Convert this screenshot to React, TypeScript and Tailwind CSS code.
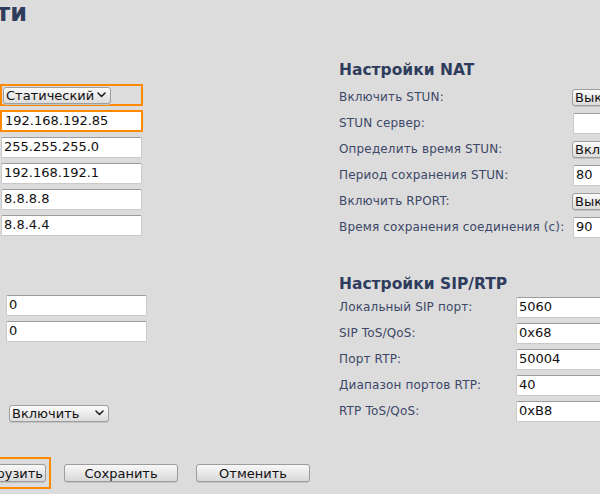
import React from 'react'

const font = { fontFamily: '"DejaVu Sans", "Noto Sans", sans-serif' }

function Chevron() {
  return (
    <svg width="9" height="6" viewBox="0 0 9 6" className="shrink-0">
      <polyline points="1,1 4.5,4.5 8,1" fill="none" stroke="#222" strokeWidth="1.6" strokeLinecap="round" strokeLinejoin="round" />
    </svg>
  )
}

function Select({ value, className = '' }: { value: string; className?: string }) {
  return (
    <div
      className={`flex h-[17px] items-center justify-between rounded-[3px] border border-[#9e9e9e] bg-gradient-to-b from-[#fbfbfb] to-[#dcdcdc] pl-[2px] pr-[4px] text-[13px] leading-none text-[#111] shadow-[0_1px_0_#c4c4c4] ${className}`}
    >
      <span className="whitespace-nowrap">{value}</span>
      <Chevron />
    </div>
  )
}

function Field({ value, className = '', highlight = false }: { value: string; className?: string; highlight?: boolean }) {
  if (highlight) {
    return (
      <div className={`flex h-[22px] items-center border-2 border-[#ff8a00] bg-white pl-[3px] text-[13px] text-[#111] ${className}`}>
        {value}
      </div>
    )
  }
  return (
    <div
      className={`flex h-[21px] items-center rounded-[2px] border border-[#c9c9c9] border-t-[#9c9c9c] bg-white pl-[2px] text-[13px] text-[#111] ${className}`}
    >
      {value}
    </div>
  )
}

function Button({ label, className = 'w-[114px]' }: { label: string; className?: string }) {
  return (
    <div
      className={`flex h-[18px] shrink-0 items-center justify-center whitespace-nowrap rounded-[3px] border border-[#9c9c9c] bg-gradient-to-b from-[#f8f8f8] to-[#d8d8d8] text-[13px] leading-none text-[#111] shadow-[0_1px_0_#c4c4c4] ${className}`}
    >
      {label}
    </div>
  )
}

const natRows: { label: string; kind: 'select' | 'input'; value: string }[] = [
  { label: 'Включить STUN:', kind: 'select', value: 'Выключить' },
  { label: 'STUN сервер:', kind: 'input', value: '' },
  { label: 'Определить время STUN:', kind: 'select', value: 'Включить' },
  { label: 'Период сохранения STUN:', kind: 'input', value: '80' },
  { label: 'Включить RPORT:', kind: 'select', value: 'Выключить' },
  { label: 'Время сохранения соединения (с):', kind: 'input', value: '90' },
]

const sipRows = [
  { label: 'Локальный SIP порт:', value: '5060' },
  { label: 'SIP ToS/QoS:', value: '0x68' },
  { label: 'Порт RTP:', value: '50004' },
  { label: 'Диапазон портов RTP:', value: '40' },
  { label: 'RTP ToS/QoS:', value: '0xB8' },
]

export default function App() {
  return (
    <div className="h-[494px] w-[600px] overflow-hidden bg-[#dcdcdc]" style={font}>
      {/* Page title, mostly scrolled out to the left */}
      <div className="flex h-[26px] w-[27px] justify-end">
        <h1 className="whitespace-nowrap text-[24px] font-bold leading-[26px] text-[#2f3c5c]">Настройки сети</h1>
      </div>

      <div className="flex">
        {/* Left column: network settings controls */}
        <div className="flex w-[339px] shrink-0 flex-col">
          <div className="mt-[56px]">
            <div className="flex h-[26px] items-center">
              <div className="flex h-[22px] w-[143px] items-center border-2 border-[#ff8a00] pl-px">
                <Select value="Статический" className="w-[108px]" />
              </div>
            </div>
            <div className="flex h-[26px] items-center">
              <Field value="192.168.192.85" highlight className="w-[143px]" />
            </div>
            {['255.255.255.0', '192.168.192.1', '8.8.8.8', '8.8.4.4'].map((v) => (
              <div key={v} className="flex h-[26px] items-center">
                <Field value={v} className="ml-px w-[141px]" />
              </div>
            ))}
          </div>

          <div className="mt-[54px]">
            {['0', '0'].map((v, i) => (
              <div key={i} className="flex h-[26px] items-center">
                <Field value={v} className="ml-[6px] w-[141px]" />
              </div>
            ))}
          </div>

          <div className="mt-[56px] flex h-[26px] items-center">
            <Select value="Включить" className="ml-[9px] w-[100px]" />
          </div>

          <div className="mt-[31px] flex items-center">
            <div className="ml-[-31px] shrink-0 border-2 border-[#ff8a00] px-[3px] py-[5px]">
              <Button label="Загрузить" className="w-[72px] justify-end pr-[2px]" />
            </div>
            <div className="ml-[13px]">
              <Button label="Сохранить" />
            </div>
            <div className="ml-[18px]">
              <Button label="Отменить" />
            </div>
          </div>
        </div>

        {/* Right column: NAT and SIP/RTP */}
        <div className="flex shrink-0 flex-col">
          <h2 className="mt-[34px] h-[20px] whitespace-nowrap text-[15.5px] font-bold leading-[20px] text-[#2f3c5c]">Настройки NAT</h2>
          <div className="mt-[4px]">
            {natRows.map((r) => (
              <div key={r.label} className="flex h-[26px] items-center">
                <div className="w-[233px] shrink-0 whitespace-nowrap text-[12px] tracking-[0.15px] text-[#3c4867]">{r.label}</div>
                {r.kind === 'select' ? (
                  <Select value={r.value} className="w-[100px]" />
                ) : (
                  <Field value={r.value} className="ml-px w-[141px]" />
                )}
              </div>
            ))}
          </div>

          <h2 className="mt-[34px] h-[20px] whitespace-nowrap text-[15.5px] font-bold leading-[20px] text-[#2f3c5c]">Настройки SIP/RTP</h2>
          <div>
            {sipRows.map((r) => (
              <div key={r.label} className="flex h-[26px] items-center">
                <div className="w-[177px] shrink-0 whitespace-nowrap text-[12px] tracking-[0.15px] text-[#3c4867]">{r.label}</div>
                <Field value={r.value} className="w-[141px]" />
              </div>
            ))}
          </div>
        </div>
      </div>
    </div>
  )
}
